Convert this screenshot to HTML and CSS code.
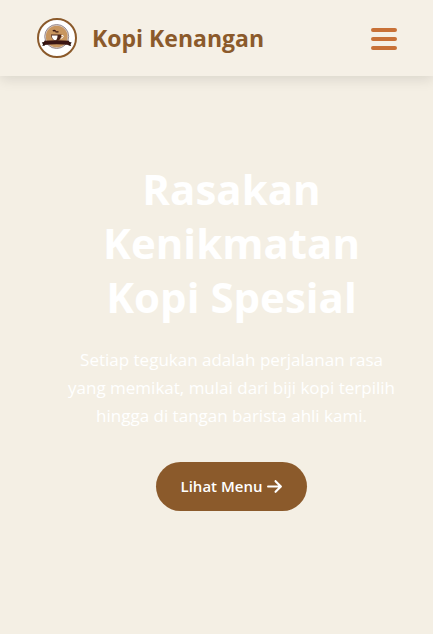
FILE: index.html
```html
<!DOCTYPE html>
<html lang="id">
<head>
<meta charset="utf-8">
<meta name="viewport" content="width=device-width, initial-scale=1">
<title>Kopi Kenangan</title>
<link rel="stylesheet" href="styles.css">
</head>
<body>
<header class="navbar">
  <a class="brand" href="#">
    <svg class="brand-logo" viewBox="0 0 40 40" aria-hidden="true">
      <circle cx="20" cy="20" r="19" fill="#fff" stroke="#8b5a2b" stroke-width="2"/>
      <circle cx="19.700" cy="18.500" r="12" fill="#d9ccc6" stroke="#9a8d91" stroke-width="1"/>
      <circle cx="19.700" cy="18.500" r="10.800" fill="#c8965f"/>
      <path d="M15.800 13q1.500-1 2.800.2M18.500 13.900h3" fill="none" stroke="#3c1812" stroke-width="1.400"/>
      <path d="M14 16.400h10.500c-.2 3.300-1.500 5.500-3.500 6h-3.500c-2-.5-3.300-2.700-3.500-6z" fill="#4a241a"/>
      <path d="M14.700 17.600h5.800c0 2-.5 3.800-1.500 4.600h-1.500c-1.600-.6-2.600-2.300-2.800-4.600z" fill="#fff"/>
      <path d="M24.500 17.500q2.300-.4 1.700 1.300-.5 1.300-2.500 1.500" fill="none" stroke="#fff" stroke-width="1"/>
      <path d="M4.800 24.500l3.200-.7v3.700l-2.700.5.700-1.700zM34.700 24.500l-3.200-.7v3.700l2.700.5-.7-1.700z" fill="#26100d"/>
      <path d="M7.200 22.800q12.500-1.300 25 0V27q-12.500-1.300-25 0z" fill="#3a1513"/>
    </svg>
    <span class="brand-name">Kopi Kenangan</span>
  </a>
  <button class="menu-toggle" type="button" aria-label="Menu">
    <svg class="menu-icon" viewBox="0 0 26 24" aria-hidden="true">
      <path d="M2 4h22M2 13h22M2 22h22" fill="none" stroke="#c87137" stroke-width="4" stroke-linecap="round"/>
    </svg>
  </button>
</header>
<main class="hero">
  <h1 class="hero-title">Rasakan Kenikmatan Kopi Spesial</h1>
  <p class="hero-text">Setiap tegukan adalah perjalanan rasa yang memikat, mulai dari biji kopi terpilih hingga di tangan barista ahli kami.</p>
  <a class="hero-button" href="#menu">Lihat Menu
    <svg class="arrow-icon" viewBox="0 0 448 512" aria-hidden="true"><path fill="currentColor" d="M438.600 278.600c12.500-12.500 12.500-32.800 0-45.300l-160-160c-12.500-12.500-32.800-12.500-45.300 0s-12.500 32.800 0 45.300L338.800 224H32c-17.700 0-32 14.300-32 32s14.300 32 32 32h306.700L233.400 393.400c-12.500 12.500-12.500 32.800 0 45.300s32.800 12.500 45.300 0l160-160z"/></svg>
  </a>
</main>
</body>
</html>
```
FILE: styles.css
```css
* {
  box-sizing: border-box;
  margin: 0;
  padding: 0;
}

body {
  background: #f4efe4;
  font-family: "Segoe UI", "Open Sans", "Noto Sans", sans-serif;
}

.navbar {
  display: flex;
  align-items: center;
  justify-content: space-between;
  padding: 18px 36px 18px 37px;
  background: #f5f0e6;
  box-shadow: 0 4px 12px rgba(0, 0, 0, 0.1);
}

.brand {
  display: flex;
  align-items: center;
  gap: 15px;
  color: #8b5a2b;
  text-decoration: none;
}

.brand-logo {
  width: 40px;
  height: 40px;
}

.brand-name {
  font-size: 23px;
  font-weight: 700;
  line-height: 40px;
}

.menu-toggle {
  display: flex;
  border: 0;
  background: none;
  cursor: pointer;
}

.menu-icon {
  width: 26px;
  height: 24px;
}

.hero {
  display: flex;
  flex-direction: column;
  align-items: center;
  padding: 86px 32px 64px 62px;
  color: #fff;
  text-align: center;
}

.hero-title {
  max-width: 331px;
  font-size: 42px;
  font-weight: 700;
  line-height: 54px;
}

.hero-text {
  margin-top: 22px;
  font-size: 17px;
  line-height: 28px;
}

.hero-button {
  display: flex;
  align-items: center;
  gap: 5px;
  margin-top: 32px;
  padding: 12px 25px;
  border-radius: 50px;
  background: #8b5a2b;
  color: #fff;
  font-size: 15px;
  font-weight: 600;
  line-height: 25px;
  text-decoration: none;
}

.arrow-icon {
  width: 15px;
  height: 17px;
}
```
